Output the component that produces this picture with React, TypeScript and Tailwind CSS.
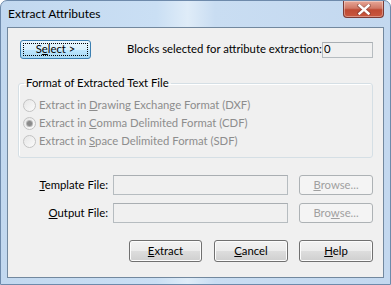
import type { ReactNode } from 'react';

const FONT = "font-['Lato','Noto_Sans',sans-serif]";

function Button({
  children,
  className = '',
  disabled = false,
}: {
  children: ReactNode;
  className?: string;
  disabled?: boolean;
}) {
  if (disabled) {
    return (
      <div
        className={`flex shrink-0 items-center justify-center rounded-[3px] border border-[#adb2b5] bg-[#f4f4f4] text-[11.3px] text-[#a0a0a0] ${className}`}
      >
        {children}
      </div>
    );
  }
  return (
    <div
      className={`flex shrink-0 items-center justify-center rounded-[3px] border border-[#707070] bg-[linear-gradient(#f2f2f2_0%,#ebebeb_50%,#dddddd_51%,#cfcfcf_100%)] text-[11.3px] text-black shadow-[inset_0_0_0_1px_#fcfcfc] ${className}`}
    >
      {children}
    </div>
  );
}

function Radio({ checked, children }: { checked?: boolean; children: ReactNode }) {
  return (
    <div className="flex h-[18px] items-center">
      <div className="flex h-[13px] w-[13px] shrink-0 items-center justify-center rounded-full border border-[#c3c3c3] bg-[linear-gradient(135deg,#e6e6e6,#fbfbfb)]">
        {checked && <div className="h-[5px] w-[5px] rounded-full bg-[#8a8a8a] shadow-[0_0_0_1px_#b5b5b5]" />}
      </div>
      <span className="ml-[3px] whitespace-nowrap text-[11.3px] text-[#8d8d8d]">{children}</span>
    </div>
  );
}

function Field({ className = '' }: { className?: string }) {
  return (
    <div
      className={`shrink-0 border border-[#b6bcc0] border-t-[#a9aeb2] bg-[#f0f0f0] ${className}`}
    />
  );
}

export default function App() {
  return (
    <div
      className={`${FONT} relative flex h-[285px] w-[391px] flex-col overflow-hidden rounded-t-[7px] border border-[#6e8aab] bg-[linear-gradient(90deg,#c2d8ef_0%,#cadff4_40%,#dfecf8_48%,#c9ddf2_55%,#c3d8ef_100%)]`}
    >
      {/* title bar */}
      <div className="flex h-[26px] shrink-0 items-start justify-between">
        <span className="ml-[7px] mt-[5px] text-[12px] leading-[16px] text-black">Extract Attributes</span>
        <div className="mr-[6px] flex h-[17px] w-[41px] items-center justify-center rounded-b-[4px] border border-t-0 border-[#7a3a35] bg-[linear-gradient(#e7a898_0%,#d07866_45%,#bf4a33_55%,#c9573e_100%)] shadow-[inset_0_0_0_1px_rgba(255,255,255,0.35)]">
          <svg width="14" height="11" viewBox="0 0 14 11">
            <path d="M2 1.5 L12 9.5 M12 1.5 L2 9.5" stroke="#6b3a34" strokeWidth="4" strokeLinecap="square" opacity="0.45" />
            <path d="M2.5 1.5 L11.5 9.5 M11.5 1.5 L2.5 9.5" stroke="#ffffff" strokeWidth="2.4" strokeLinecap="square" />
          </svg>
        </div>
      </div>

      {/* client area */}
      <div className="mx-[6px] flex h-[251px] flex-col border border-[#72889e] bg-[#f0f0f0] px-[10px]">
        {/* select row */}
        <div className="mt-[12px] flex h-[19px] items-center">
          <div className="ml-[2px] flex h-[19px] w-[71px] shrink-0 items-center justify-center rounded-[3px] border border-[#3c7fb1] bg-[linear-gradient(#eaf6fd_0%,#d9f0fc_50%,#bee6fd_51%,#a7d9f5_100%)] p-[2px]">
            <div className="flex h-full w-full items-center justify-center border border-dotted border-black text-[11.3px] text-black">
              S<u>e</u>lect &gt;
            </div>
          </div>
          <span className="ml-[36px] whitespace-nowrap text-[11.3px] text-black">
            Blocks selected for attribute extraction:
          </span>
          <div className="ml-auto flex h-[16px] w-[51px] shrink-0 items-center border border-[#b6bcc0] border-t-[#a9aeb2] bg-[#f0f0f0] pl-[1px] text-[11.3px] text-black">
            0
          </div>
        </div>

        {/* group box */}
        <fieldset className="mt-[16px] rounded-[3px] border border-[#d5dfe5] px-[4px] pb-[7px] pt-[5px] shadow-[inset_1px_1px_0_#ffffff]">
          <legend className="ml-[1px] px-[2px] text-[11.3px] leading-[16px] text-black">Format of Extracted Text File</legend>
          <Radio>
            Extract in <u>D</u>rawing Exchange Format (DXF)
          </Radio>
          <Radio checked>
            Extract in <u>C</u>omma Delimited Format (CDF)
          </Radio>
          <Radio>
            Extract in <u>S</u>pace Delimited Format (SDF)
          </Radio>
        </fieldset>

        {/* template */}
        <div className="mt-[17px] flex h-[20px] items-center">
          <span className="w-[90px] shrink-0 whitespace-nowrap text-right text-[11.3px] text-black">
            <u>T</u>emplate File:
          </span>
          <Field className="ml-[5px] h-[20px] w-[175px]" />
          <Button disabled className="ml-[11px] h-[20px] w-[74px]">
            <u>B</u>rowse...
          </Button>
        </div>

        {/* output */}
        <div className="mt-[8px] flex h-[20px] items-center">
          <span className="w-[90px] shrink-0 whitespace-nowrap text-right text-[11.3px] text-black">
            <u>O</u>utput File:
          </span>
          <Field className="ml-[5px] h-[20px] w-[175px]" />
          <Button disabled className="ml-[11px] h-[20px] w-[74px]">
            Bro<u>w</u>se...
          </Button>
        </div>

        {/* buttons */}
        <div className="mt-[17px] flex h-[22px] items-center justify-end">
          <Button className="h-[22px] w-[73px]">
            <u>E</u>xtract
          </Button>
          <Button className="ml-[12px] h-[22px] w-[74px]">
            <u>C</u>ancel
          </Button>
          <Button className="ml-[11px] h-[22px] w-[74px]">
            <u>H</u>elp
          </Button>
        </div>
      </div>
    </div>
  );
}
